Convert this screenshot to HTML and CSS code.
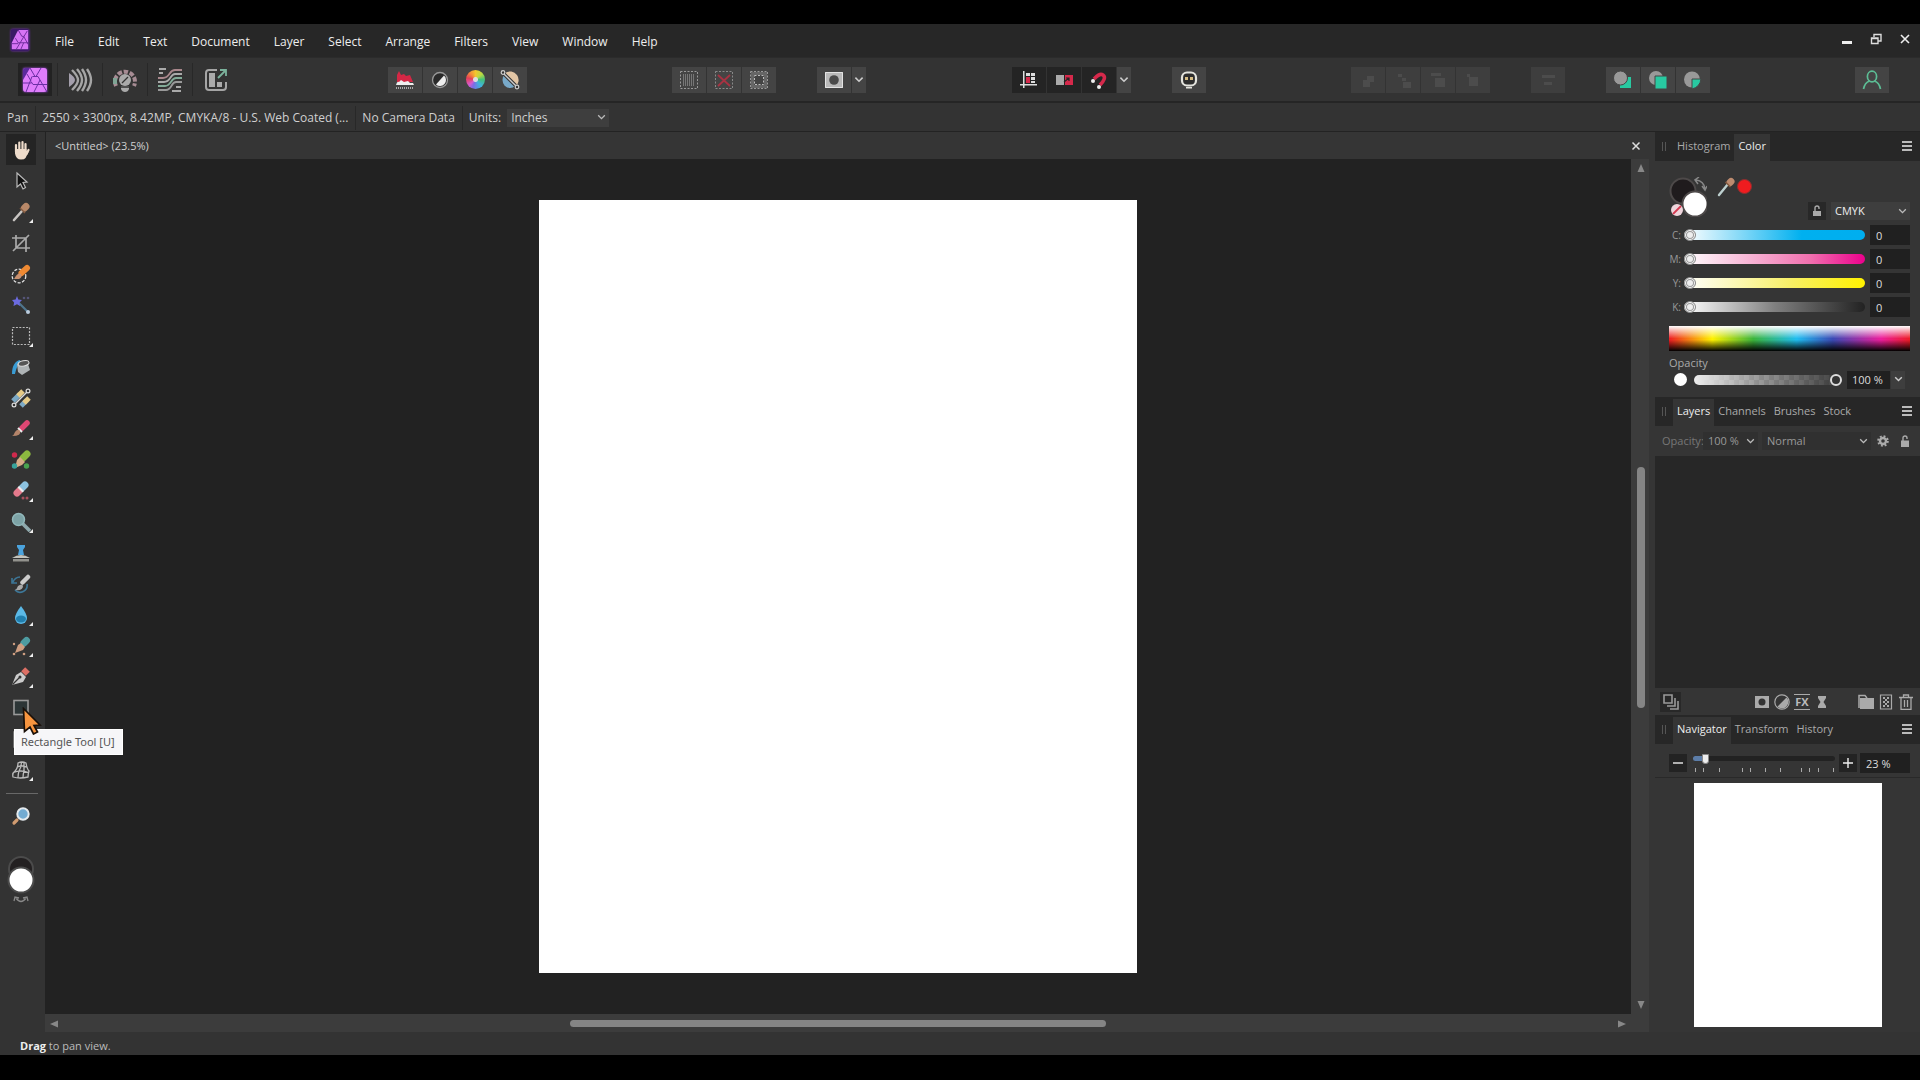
FILE: index.html
```html
<!DOCTYPE html>
<html lang="en">
<head>
<meta charset="utf-8">
<title>Untitled (23.5%)</title>
<link rel="stylesheet" href="styles.css">
</head>
<body>
<div class="app">
  <header class="menubar">
    <svg class="logo" viewBox="0 0 20 24"><path fill="#3b1a66" d="M2 0h16a2 2 0 0 1 2 2v20a2 2 0 0 1-2 2H2a2 2 0 0 1-2-2V2a2 2 0 0 1 2-2z"/><path fill="#d774f5" d="M8 1h11v21H1v-7z"/><path fill="none" stroke="#6a2a98" stroke-width="1" d="M8 1l4 7M18 2L6 22M5 10l3 5h11M12 8h2l5 9M14 15l-3 7M1 16h7"/></svg>
    <nav class="menus">
      <button>File</button><button>Edit</button><button>Text</button><button>Document</button><button>Layer</button><button>Select</button><button>Arrange</button><button>Filters</button><button>View</button><button>Window</button><button>Help</button>
    </nav>
    <div class="win">
      <button aria-label="Minimize"><svg viewBox="0 0 12 12"><path fill="#eee" d="M1 8h10v3H1z"/></svg></button>
      <button aria-label="Restore"><svg viewBox="0 0 12 12"><path fill="none" stroke="#ddd" stroke-width="1.4" d="M4 4V1.500h7V8H8.500M1.500 5h6.500v5.500H1.500zM1 5.500h7"/></svg></button>
      <button aria-label="Close"><svg viewBox="0 0 12 12"><path fill="none" stroke="#eee" stroke-width="1.6" d="M2 2l8 8M10 2l-8 8"/></svg></button>
    </div>
  </header>

  <div class="toolbar">
    <div class="personas">
      <button class="on" aria-label="Photo"><svg viewBox="0 0 26 26"><rect x="1" y="1" width="24" height="24" rx="3" fill="#df7dfb"/><path fill="#5b2a9c" d="M3 1h5L1 13V3a2 2 0 0 1 2-2z"/><path fill="none" stroke="#6b2fa5" stroke-width="1" d="M8 1l5 8.500M19 1l-5 8.500M5 7l4 7M1 16h8.500M10 9.500L4 25M10.500 9.500h5.500L18 13l7 12M18 13l-6 12M15 17.500h10M9 14.500l2 3h4"/></svg></button>
      <button aria-label="Liquify"><svg viewBox="0 0 26 26"><path fill="#a49fac" d="M2 6q6 4 6 7t-6 7z"/><path fill="none" stroke="#a5a5a5" stroke-width="2.400" d="M5 3q6 6 6 10T5 23M10 2q5 6 5 11t-5 11M15 2q4 6 4 11t-4 11M20 2q4 6 4 11t-4 11"/></svg></button>
      <button aria-label="Develop"><svg viewBox="0 0 26 26"><path fill="none" stroke="#a78c94" stroke-width="4" stroke-dasharray="4.500 1.700" d="M4 19a10 10 0 1 1 18 0"/><path fill="none" stroke="#7fa495" stroke-width="4" d="M3 11v6"/><circle cx="13" cy="13" r="6" fill="#aaa"/><path fill="#aaa" d="M9 19h8v3q-1 3-4 3t-4-3z"/><path stroke="#333" stroke-width="1.300" d="M10 16l6-6M9 20h8"/></svg></button>
      <button aria-label="Tone Mapping"><svg viewBox="0 0 26 26"><g fill="none" stroke-width="1.800"><path stroke="#aaa" d="M2 2h7M2 6h4M19 20h5M15 24h9"/><path stroke="#a9878c" d="M1 11h5c7 0 6-8 12-8h7"/><path stroke="#aaa" d="M1 15h6c7 0 6-8 11-8h7"/><path stroke="#83ab98" d="M1 19h7c6 0 6-8 11-8h6"/><path stroke="#999" d="M1 23h8c6 0 5-8 10-8h6"/></g></svg></button>
      <button aria-label="Export"><svg viewBox="0 0 26 26"><path fill="none" stroke="#a5a5a5" stroke-width="2" d="M14 3H6a3 3 0 0 0-3 3v14a3 3 0 0 0 3 3h14a3 3 0 0 0 3-3v-5"/><path fill="#aaa" d="M6 6h6v14H6zM14 15h5v5h-5z"/><path fill="none" stroke="#7bb29c" stroke-width="1.800" d="M15 11l8-8M17 3h6v6"/></svg></button>
    </div>
    <div class="group wide">
      <button aria-label="Auto Levels"><svg viewBox="0 0 20 20"><path fill="#d42745" d="M2 12V5l2-4 2 4 3-1 2 2 4-1 3 7z"/><path fill="#eee" d="M1 15q1-4 3-3l2-2 3 2 4-1 2 2 3 0 1 2z"/><path stroke="#aaa" stroke-dasharray="1 1" stroke-width="2" d="M1 18h18"/></svg></button>
      <button aria-label="Auto Contrast"><svg viewBox="0 0 20 20"><circle cx="10" cy="10" r="7.500" fill="#2a2a2a" stroke="#999" stroke-width="1.300"/><path fill="#eee" d="M14 5.500A6 6 0 0 1 6 14.500z"/></svg></button>
      <button aria-label="Auto Colors"><i class="wheel"></i></button>
      <button aria-label="Auto White Balance"><svg viewBox="0 0 20 20"><ellipse cx="10" cy="10" rx="7.500" ry="8" fill="#78a9c9"/><path fill="#e2c5a5" d="M5 3a8 8 0 0 1 10 14z"/><path stroke="#333" stroke-width="3.500" d="M2 2l15 15"/><path stroke="#ccc" stroke-width="1.400" d="M2 2l15 15"/><g fill="#333" stroke="#ccc" stroke-width="1.200"><circle cx="3" cy="2.500" r="1.800"/><circle cx="17" cy="17" r="1.800"/></g></svg></button>
    </div>
    <div class="group wide">
      <button aria-label="Select All"><svg viewBox="0 0 20 20"><path stroke="#777" stroke-dasharray="1 1" stroke-width="12" d="M4 10h12"/><rect x="1.500" y="1.500" width="17" height="17" fill="none" stroke="#999" stroke-dasharray="2 1.500"/></svg></button>
      <button aria-label="Deselect"><svg viewBox="0 0 20 20"><rect x="1.500" y="1.500" width="17" height="17" fill="none" stroke="#888" stroke-dasharray="2 1.500"/><path stroke="#a83242" stroke-width="1.800" d="M4 5l12 11M16 5L4 16"/></svg></button>
      <button aria-label="Invert Selection"><svg viewBox="0 0 20 20"><rect x="1.500" y="1.500" width="17" height="17" fill="none" stroke="#999" stroke-dasharray="2 1.500"/><rect x="3.500" y="3.500" width="13" height="13" fill="none" stroke="#666" stroke-width="3"/><rect x="5.500" y="5.500" width="9" height="9" fill="#444" stroke="#bbb" stroke-dasharray="2 1.500"/></svg></button>
    </div>
    <div class="group">
      <button aria-label="Quick Mask"><svg viewBox="0 0 20 20"><path fill="#b9b9b9" d="M1 2h18v16H1z"/><path fill="none" stroke="#e3e3e3" d="M1.500 2.500h17v15h-17z"/><circle cx="10" cy="10" r="4.800" fill="#4a4a4a"/></svg></button>
      <button class="drop" aria-label="Mask options"><svg viewBox="0 0 10 10"><path class="chev" d="M2 3l3 3 3-3"/></svg></button>
    </div>
    <div class="group dark wide">
      <button aria-label="Force Pixel Alignment"><svg viewBox="0 0 20 20"><path fill="#ddd" d="M4 1h1.500v17H4zM1 14h17v1.500H1zM7 3h4v3H7zM12 3h4v3h-4zM12 7h4v3h-4zM12 11h4v2h-4z"/><path fill="#d6294b" d="M7 7h4v6H7z"/></svg></button>
      <button aria-label="Move by Whole Pixels"><svg viewBox="0 0 20 20"><path fill="#aaa" d="M2 5h8v10H2z"/><path fill="#d6294b" d="M11 5h8v10h-8z"/><path fill="none" stroke="#242424" stroke-width="1.200" d="M10 12l5-4M12 8h3v3"/></svg></button>
      <button aria-label="Snapping"><svg viewBox="0 0 20 20"><path fill="none" stroke="#d6294b" stroke-width="3.600" d="M5 9c3-3 6-6 9-4s1 6-3 10"/><circle cx="4" cy="11" r="2" fill="#eee"/><circle cx="10" cy="17" r="2" fill="#eee"/></svg></button>
      <button class="drop lit" aria-label="Snapping options"><svg viewBox="0 0 10 10"><path class="chev" d="M2 3l3 3 3-3"/></svg></button>
    </div>
    <div class="group">
      <button aria-label="Assistant"><svg viewBox="0 0 20 20"><rect x="3" y="2.500" width="14" height="13" rx="5" fill="#2d2d2d" stroke="#e4e4de" stroke-width="2.200"/><path fill="#d6bd85" d="M6 7h3v3H6zM11 7h3v3h-3z"/><path fill="#e4e4de" d="M7 17h6v1.500H7z"/></svg></button>
    </div>
    <div class="group wide dim">
      <button aria-label="Move to Back" disabled><svg viewBox="0 0 20 20"><path fill="#5a5a5a" d="M5 10h4V6h7v6h-4v5H5z"/></svg></button>
      <button aria-label="Back One" disabled><svg viewBox="0 0 20 20"><path fill="#5a5a5a" d="M5 4h4v3H5zM9 8h4v3H9zM10 12h8v6h-8z"/></svg></button>
      <button aria-label="Forward One" disabled><svg viewBox="0 0 20 20"><path fill="#5a5a5a" d="M3 3h10v3H3zM7 8h10v9H7z"/></svg></button>
      <button aria-label="Move to Front" disabled><svg viewBox="0 0 20 20"><path fill="#5a5a5a" d="M4 4h3v3H4zM6 7h9v9H6z"/></svg></button>
    </div>
    <div class="group dim">
      <button aria-label="Alignment" disabled><svg viewBox="0 0 20 20"><path fill="#5a5a5a" d="M4 5h13v3H4zM6 12h8v3H6z"/></svg></button>
    </div>
    <div class="group">
      <button aria-label="Insert Behind"><svg viewBox="0 0 20 20"><path fill="#28c9a1" d="M7 7h11v11H7z"/><circle cx="7.500" cy="8" r="7" fill="#999" stroke="#444"/></svg></button>
      <button aria-label="Insert on Top"><svg viewBox="0 0 20 20"><circle cx="8" cy="8" r="7" fill="#999"/><path fill="#28c9a1" stroke="#444" d="M7 6h12v13H7z"/></svg></button>
      <button aria-label="Insert Inside"><svg viewBox="0 0 20 20"><circle cx="9" cy="9.500" r="8" fill="#999"/><path fill="#28c9a1" stroke="#444" d="M9 9h9q-1 8-9 10z"/></svg></button>
    </div>
    <div class="group wide">
      <button aria-label="Account"><svg viewBox="0 0 20 20"><path fill="none" stroke="#5cbd95" stroke-width="1.700" d="M1.500 19c1-5 3-7 6-8M18.500 19c-1-5-3-7-6-8"/><ellipse cx="10" cy="6.500" rx="4.600" ry="5.300" fill="none" stroke="#5cbd95" stroke-width="1.700"/></svg></button>
    </div>
  </div>

  <div class="context">
    <span class="cell">Pan</span>
    <span class="cell">2550 × 3300px, 8.42MP, CMYKA/8 - U.S. Web Coated (...</span>
    <span class="cell">No Camera Data</span>
    <label for="units">Units:</label>
    <select id="units" class="sel units"><option>Inches</option></select>
  </div>

  <div class="main">
    <aside class="tools">
      <button class="on" aria-label="View"><svg viewBox="0 0 20 20"><g fill="none" stroke="#eedccb" stroke-width="2.200" stroke-linecap="round"><path d="M5 5v7M8.300 2.500V11M11.500 2v9M14.500 4v8M17.500 10l-2 4"/></g><path fill="#eedccb" d="M4 9h11.500v2l2 1-3 6q-1 1.500-4.500 1.500-5 0-6-6z"/></svg></button>
      <button aria-label="Move"><svg viewBox="0 0 20 20"><path fill="#111" stroke="#bbb" stroke-width="1.200" d="M6 2l10 9-4 .5 2.500 5-2.500 1.500-2.500-5L6 16z"/></svg></button>
      <button class="fly" aria-label="Colour Picker"><svg viewBox="0 0 20 20"><path stroke="#c8c5c2" stroke-width="2.600" stroke-linecap="round" d="M3 18l8-9"/><path stroke="#b88868" stroke-width="7" stroke-linecap="round" d="M13.500 6L15 4.500"/><path stroke="#825a40" stroke-width="1.500" d="M9 6l5 5"/></svg></button>
      <button aria-label="Crop"><svg viewBox="0 0 20 20"><path fill="none" stroke="#aaa" stroke-width="1.700" d="M5 2v13h14M1 5h14v14M2 18L18 2"/></svg></button>
      <button aria-label="Selection Brush"><svg viewBox="0 0 20 20"><circle cx="8" cy="12" r="6.800" fill="none" stroke="#ddd" stroke-dasharray="3 1.500" stroke-width="1.300"/><path stroke="#ef8a33" stroke-width="6" stroke-linecap="round" d="M10.500 9L16 4"/><path fill="#c99170" d="M3 15q4-7 7-5 2 3-2 5z"/></svg></button>
      <button aria-label="Flood Select"><svg viewBox="0 0 20 20"><path stroke="#4f758d" stroke-width="2.200" d="M7 7l10 10"/><circle cx="17" cy="17" r="2" fill="#bcd"/><path fill="#6c6be0" d="M6 1l1.300 3.500L11 5 8.500 7.500 9 11 6 9.300 2.500 11l.6-3.500L1 5l3.600-.5z"/><circle cx="13" cy="3" r="1.300" fill="#557"/><circle cx="17" cy="3" r="1.300" fill="#557"/></svg></button>
      <button class="fly" aria-label="Marquee"><svg viewBox="0 0 20 20"><rect x="1.500" y="1.500" width="17" height="17" fill="none" stroke="#bbb" stroke-dasharray="2 1.400" stroke-width="1.200"/></svg></button>
      <button aria-label="Flood Fill"><svg viewBox="0 0 20 20"><path fill="#3a9cd4" d="M1 17C1 9 4 4 9 3l1 3c-4 2-5 7-6 11z"/><path fill="#aeb3b5" d="M6 7l10-3 3 9-8 5-4-3z"/><ellipse cx="12.500" cy="6.500" rx="5.500" ry="2.600" fill="#555" stroke="#ddd" transform="rotate(-12 12 6)"/></svg></button>
      <button aria-label="Gradient"><svg viewBox="0 0 20 20"><path stroke="#7ba8c4" stroke-width="5" d="M2 13l7-7M10 18l6-6"/><path stroke="#e6ca86" stroke-width="5" d="M7 8l5-5M13 15l5-5"/><path stroke="#ddd" stroke-width="1.500" d="M3 17L17 3"/><g fill="#333" stroke="#ddd" stroke-width="1.200"><circle cx="3" cy="17" r="1.900"/><circle cx="17" cy="3" r="1.900"/></g></svg></button>
      <button class="fly" aria-label="Paint Brush"><svg viewBox="0 0 20 20"><path stroke="#df4773" stroke-width="5.500" stroke-linecap="round" d="M11 9l5-5"/><path stroke="#eee" stroke-width="2" d="M7 9l4 4"/><path fill="#b4846a" d="M1 17q2-1 3-4 3-4 5-1 2 5-8 5z"/></svg></button>
      <button aria-label="Colour Replacement"><svg viewBox="0 0 20 20"><path stroke="#8cba3f" stroke-width="7" stroke-linecap="round" d="M12 8l4-4"/><path fill="#d7ac87" d="M4 18l2-8 3-3 5 5-3 3z"/><circle cx="3.500" cy="5" r="2.700" fill="#cf294c"/><circle cx="3.500" cy="16" r="2.700" fill="#38a39a"/><circle cx="15.500" cy="16" r="2.700" fill="#48a24f"/></svg></button>
      <button class="fly" aria-label="Erase Brush"><svg viewBox="0 0 20 20"><path stroke="#8cc3e1" stroke-width="7" stroke-linecap="round" d="M11 7l3-3"/><path stroke="#e47a8c" stroke-width="7" stroke-linecap="round" d="M8 10l-2 2"/><path stroke="#eee" stroke-width="7" d="M9 9l1.500-1.500"/><circle cx="12" cy="17" r="1.500" fill="#a8505d"/><circle cx="16" cy="17" r="1.500" fill="#a8505d"/></svg></button>
      <button class="fly" aria-label="Dodge Brush"><svg viewBox="0 0 20 20"><path stroke="#8fa9ad" stroke-width="3.600" d="M11 11l8 8"/><circle cx="7.500" cy="7.500" r="6" fill="#7da3a6" stroke="#91b8bb" stroke-width="1.500"/></svg></button>
      <button aria-label="Clone Brush"><svg viewBox="0 0 20 20"><path fill="#4ba3dd" d="M6 2h8v2l-2 3 1 5H7l1-5-2-3z"/><path fill="#c4c4bd" d="M1 15q9-6 18 0z"/><path fill="#92928d" d="M2 16h16v2.500H2z"/></svg></button>
      <button aria-label="Undo Brush"><svg viewBox="0 0 20 20"><path fill="none" stroke="#3d7798" stroke-width="1.600" d="M2 8a8 8 0 0 1 7-5M1 4v5h5M16 10a7 7 0 0 1-12 6"/><path stroke="#ccc" stroke-width="4.500" stroke-linecap="round" d="M11.500 8.500L17 3"/><path fill="#aaa" d="M4 16q2-1 3-4 4-3 5 0 0 5-8 4z"/></svg></button>
      <button class="fly" aria-label="Blur Brush"><svg viewBox="0 0 20 20"><path fill="#5bb9e7" d="M10 1q6 8 6 12a6 6 0 0 1-12 0q0-4 6-12z"/><ellipse cx="10" cy="14" rx="5" ry="3.400" fill="#217fae"/></svg></button>
      <button class="fly" aria-label="Healing Brush"><svg viewBox="0 0 20 20"><path stroke="#4e9ca1" stroke-width="7" stroke-linecap="round" d="M13 7l2.500-2.500"/><path fill="#cf9e81" d="M4 17l3-8 3-2 4 4-2 3z"/><circle cx="3" cy="8" r="1.200" fill="#cf9e81"/><circle cx="3" cy="18" r="1.300" fill="#cf9e81"/><circle cx="13" cy="18" r="1.300" fill="#cf9e81"/></svg></button>
      <button class="fly" aria-label="Pen"><svg viewBox="0 0 20 20"><path stroke="#dd7065" stroke-width="6.500" d="M12.500 6.500l4-4"/><path fill="#cbcbcb" d="M1 18L5 8l5-3 5 5-3 5z"/><path stroke="#333" stroke-width="1.300" d="M1.500 17.500l7-7"/><circle cx="9" cy="10" r="1.500" fill="#333"/></svg></button>
      <button aria-label="Rectangle"><svg viewBox="0 0 20 20"><rect x="3" y="2.500" width="14" height="14" fill="#2c3536" stroke="#999" stroke-width="1.600"/></svg></button>
      <button aria-label="Artistic Text"><svg viewBox="0 0 20 20"><path fill="none" stroke="#888" stroke-width="1.500" d="M3 18V3h14v15z"/></svg></button>
      <button class="fly" aria-label="Mesh Warp"><svg viewBox="0 0 20 20"><path fill="none" stroke="#bbb" stroke-width="1.300" d="M7 3q4-2 8 0 1 6 3 8-1 3-1 6-8 2-15 0-1-4 2-6 3-3 3-8zM6 7q5-2 10 0M2.500 12.500q7-3 15 0M10.500 2q0 5-2.500 9-1 3-1 7M13 2q0 5 0 9-1 3-1 7"/></svg></button>
      <hr>
      <button class="zoom" aria-label="Zoom"><svg viewBox="0 0 20 20"><path stroke="#d09b70" stroke-width="3.200" stroke-linecap="round" d="M3 17l3-3"/><circle cx="12" cy="8" r="5.700" fill="#72abd2" stroke="#e4eaee" stroke-width="2"/></svg></button>
      <button class="swatches" aria-label="Colours"><svg viewBox="0 0 28 50"><g stroke="#4b4b4b" stroke-width="2"><circle cx="14" cy="14" r="12" fill="#232021"/><circle cx="14" cy="25" r="12.500" fill="#fff"/></g><path fill="none" stroke="#888" stroke-width="1.300" d="M9 43q5 7 10 0M7 46l1-4 4 1M21 46l-1-4-4 1"/></svg></button>
      <div class="tip" role="tooltip">Rectangle Tool [U]</div>
      <svg class="cursor" viewBox="0 0 20 28"><path fill="#f7953f" stroke="#1a1009" stroke-width="1.700" d="M1.500 1.500l16.500 16.500-6 .5 3.500 6.500-4 2-3.500-7-5.500 4.500z"/></svg>
    </aside>

    <section class="doc">
      <div class="tabbar"><span>&lt;Untitled&gt; (23.5%)</span><button aria-label="Close document"><svg viewBox="0 0 12 12"><path fill="none" stroke="#ddd" stroke-width="1.500" d="M2.500 2.500l7 7M9.500 2.500l-7 7"/></svg></button></div>
      <div class="view">
        <div class="canvas"><div class="paper"></div></div>
        <div class="vbar"><svg viewBox="0 0 10 10"><path fill="#888" d="M5 1l3.500 8h-7z"/></svg><div class="rail"><i></i></div><svg viewBox="0 0 10 10"><path fill="#888" d="M5 9l3.500-8h-7z"/></svg></div>
        <div class="hbar"><svg viewBox="0 0 10 10"><path fill="#888" d="M1 5l8-3.500v7z"/></svg><div class="rail"><i></i></div><svg viewBox="0 0 10 10"><path fill="#888" d="M9 5L1 1.500v7z"/></svg></div>
      </div>
    </section>

    <aside class="panels">
      <section>
        <div class="tabs"><i class="grip"></i><button>Histogram</button><button class="on">Color</button><button class="burger" aria-label="Panel menu"></button></div>
        <div class="color">
          <div class="picks">
            <svg class="wells" viewBox="0 0 38 40"><g stroke="#4d4949" stroke-width="2"><circle cx="14" cy="14" r="12.500" fill="#1f1b1d"/><circle cx="26" cy="27" r="12.500" fill="#fff"/></g><circle cx="8" cy="33" r="6" fill="#eed5dc"/><path stroke="#d33950" stroke-width="1.800" d="M4 37l8-8"/><path fill="none" stroke="#888" stroke-width="1.500" d="M27 3q8 1 9 9M30 0l-4 3 3 4M33 9l3 4 2-4"/></svg>
            <svg class="pick" viewBox="0 0 20 20"><path stroke="#bdd0cf" stroke-width="2.400" stroke-linecap="round" d="M3 18l9-11"/><path stroke="#bd8b6f" stroke-width="7" stroke-linecap="round" d="M14 5.500L15 4.500"/><path stroke="#825a40" stroke-width="1.500" d="M9.500 5l5 5"/></svg>
            <i class="red"></i>
            <button class="lockbtn" aria-label="Lock colour"><svg viewBox="0 0 12 12"><path fill="#aaa" d="M2 6h8v5H2z"/><path fill="none" stroke="#aaa" stroke-width="1.400" d="M4 6V3a2 2 0 0 1 4 0v1"/></svg></button>
            <select class="sel mode" aria-label="Colour mode"><option>CMYK</option></select>
          </div>
          <div class="ch c"><label for="c">C:</label><input id="c" type="range" value="0"><input type="text" value="0" aria-label="Cyan"></div>
          <div class="ch m"><label for="m">M:</label><input id="m" type="range" value="0"><input type="text" value="0" aria-label="Magenta"></div>
          <div class="ch y"><label for="y">Y:</label><input id="y" type="range" value="0"><input type="text" value="0" aria-label="Yellow"></div>
          <div class="ch k"><label for="k">K:</label><input id="k" type="range" value="0"><input type="text" value="0" aria-label="Black"></div>
          <div class="spectrum"></div>
          <label class="oplabel" for="op">Opacity</label>
          <div class="op"><i class="dot"></i><input id="op" type="range" value="100"><input type="text" value="100 %" aria-label="Opacity value"><button aria-label="Opacity options"><svg viewBox="0 0 10 10"><path class="chev" d="M2 3l3 3 3-3"/></svg></button></div>
        </div>
      </section>

      <section>
        <div class="tabs"><i class="grip"></i><button class="on">Layers</button><button>Channels</button><button>Brushes</button><button>Stock</button><button class="burger" aria-label="Panel menu"></button></div>
        <div class="layerbar">
          <label for="lop">Opacity:</label>
          <select id="lop" class="sel lop"><option>100 %</option></select>
          <select class="sel blend" aria-label="Blend mode"><option>Normal</option></select>
          <button aria-label="Blend options"><svg viewBox="0 0 12 12"><circle cx="6" cy="6" r="3" fill="none" stroke="#aaa" stroke-width="2.400"/><circle cx="6" cy="6" r="4.800" fill="none" stroke="#aaa" stroke-width="2" stroke-dasharray="1.900 1.870"/></svg></button>
          <button aria-label="Lock layer"><svg viewBox="0 0 12 12"><path fill="#aaa" d="M2 5.500h8V12H2z"/><path fill="none" stroke="#aaa" stroke-width="1.400" d="M4 6V3a2 2 0 0 1 4 0v1"/></svg></button>
        </div>
        <div class="layers"></div>
        <div class="layeracts">
          <button class="stack" aria-label="Edit all layers"><svg viewBox="0 0 16 16"><path fill="none" stroke="#999" stroke-width="1.600" d="M1 1h8v8H1zM12 4v8H4M15 7v8H7"/></svg></button>
          <button aria-label="Mask layer"><svg viewBox="0 0 16 16"><path fill="#aaa" d="M1 2h14v12H1z"/><circle cx="8" cy="8" r="3.500" fill="#333"/></svg></button>
          <button aria-label="Adjustments"><svg viewBox="0 0 16 16"><circle cx="8" cy="8" r="7.200" fill="none" stroke="#aaa" stroke-width="1.200"/><path fill="#aaa" d="M12.500 3.500a6 6 0 0 1-9 9z"/></svg></button>
          <button class="fx" aria-label="Layer effects"><span>FX</span></button>
          <button aria-label="Live filters"><svg viewBox="0 0 16 16"><path fill="#aaa" d="M4 2h8v2L9.500 8l2.500 4v2H4v-2l2.500-4L4 4z"/></svg></button>
          <button class="far" aria-label="Group"><svg viewBox="0 0 16 16"><path fill="#aaa" d="M2 4h14v11H2z"/><path fill="none" stroke="#aaa" stroke-width="1.500" d="M1 14V1.500h6L9 4"/></svg></button>
          <button aria-label="Pixel layer"><svg viewBox="0 0 16 16"><path fill="none" stroke="#aaa" stroke-width="1.200" d="M2.500 1h11v14h-11z"/><path fill="none" stroke="#aaa" stroke-width="2" stroke-dasharray="2 2" d="M5 4h6M7 6h4M5 8h6M7 10h4M5 12h6"/></svg></button>
          <button aria-label="Delete layer"><svg viewBox="0 0 16 16"><path fill="none" stroke="#aaa" stroke-width="1.300" d="M1 3.500h14M5.500 3V1h5v2M3 4v11.300h10V4M6.500 6v7M9.500 6v7"/></svg></button>
        </div>
      </section>

      <section class="navsec">
        <div class="tabs"><i class="grip"></i><button class="on">Navigator</button><button>Transform</button><button>History</button><button class="burger" aria-label="Panel menu"></button></div>
        <div class="navbar">
          <button aria-label="Zoom out"><svg viewBox="0 0 12 12"><path stroke="#eee" stroke-width="1.400" d="M1 6h10"/></svg></button>
          <div class="zoomer">
            <input type="range" value="7" aria-label="Zoom">
            <svg viewBox="0 0 142 4"><path stroke="#aaa" stroke-width="4" stroke-dasharray="1 7 1 15 1 22 1 7 1 14 1 14 1 20 1 7 1 8 1 14 1 99" d="M2 2h140"/></svg>
          </div>
          <button aria-label="Zoom in"><svg viewBox="0 0 12 12"><path stroke="#eee" stroke-width="1.400" d="M1 6h10M6 1v10"/></svg></button>
          <input type="text" value="23 %" aria-label="Zoom value">
        </div>
        <div class="preview"><div class="paper"></div></div>
      </section>
    </aside>
  </div>
  <footer class="status"><b>Drag</b> to pan view.</footer>
</div>
</body>
</html>
```
FILE: styles.css
```css
* { box-sizing: border-box; }
body {
  margin: 0;
  height: 100vh;
  padding: 24px 0 25px;
  background: #000;
  color: #d0d0d0;
  font: 11px/16px "Open Sans", "Noto Sans", sans-serif;
}
button, input, select { font: inherit; color: inherit; border: 0; margin: 0; padding: 0; background: none; border-radius: 0; outline: 0; }
button { display: flex; align-items: center; justify-content: center; }
svg { display: block; }
.chev { fill: none; stroke: #ccc; stroke-width: 1.3; }

.app { height: 100%; display: flex; flex-direction: column; background: #333; }

.menubar { flex: none; height: 33px; display: flex; align-items: center; background: #272727; padding: 0 9px 0 10px; }
.logo { width: 20px; height: 24px; margin-bottom: 2px; padding: 1px 0; filter: drop-shadow(0 0 1px #7a2fc0); }
.menus { display: flex; gap: 24px; margin: 2px 0 0 25px; color: #eee; font-size: 12px; }
.win { margin: 0 0 3px auto; display: flex; gap: 17px; }
.win svg { width: 12px; height: 12px; }

.toolbar { flex: none; height: 46px; display: flex; align-items: center; padding: 0 31px 0 18px; border-top: 1px solid #2b2b2b; border-bottom: 2px solid #252525; }
.personas { display: flex; margin-right: 5px; }
.personas button { width: 45px; height: 33px; border-right: 1px solid #282828; }
.personas button:first-child { width: 40px; padding-right: 5px; }
.personas button:last-child { border: 0; }
.personas .on { background: linear-gradient(#222, #222) 0 0 / 34px 33px no-repeat; }
.personas svg { width: 26px; height: 26px; }
.personas .on svg { filter: drop-shadow(0 0 1px #a14be0); }
.group { display: flex; gap: 1px; margin-left: 41px; }
.group.wide { margin-left: auto; }
.group button { width: 34px; height: 26px; background: #444; }
.group svg { width: 20px; height: 20px; }
.group .drop { width: 14px; }
.group .drop svg { width: 12px; height: 12px; }
.dark button { background: #242424; }
.dark .lit { background: #444; }
.dim button { background: #3e3e3e; }
.dim svg { opacity: .5; }
.wheel { width: 19px; height: 19px; border-radius: 50%; background: radial-gradient(circle, #ddd 0 2px, transparent 3px), conic-gradient(#f4c62e, #b7d943 50deg, #46bf78 90deg, #3fb4dd 140deg, #7d6be6 200deg, #d65bcf 230deg, #e54055 280deg, #f38c3a 320deg, #f4c62e); }

.context { flex: none; height: 29px; display: flex; align-items: center; border-bottom: 1px solid #232323; padding: 1px 0 0 7px; font-size: 12px; }
.cell { padding-right: 7px; margin-right: 6px; border-right: 1px solid #282828; line-height: 24px; }
.sel { appearance: none; background: #3e3e3e url("data:image/svg+xml,%3Csvg xmlns='http://www.w3.org/2000/svg' viewBox='0 0 10 10'%3E%3Cpath d='M2 3l3 3 3-3' fill='none' stroke='%23bbb' stroke-width='1.200'/%3E%3C/svg%3E") right 2px center / 11px 11px no-repeat; }
.units { width: 102px; height: 18px; margin-left: 6px; padding-left: 4px; }

.main { flex: 1; min-height: 0; display: flex; }
.tools { position: relative; flex: none; width: 45px; display: flex; flex-direction: column; align-items: flex-start; padding: 2px 0 0 6px; }
.tools button { position: relative; flex: none; width: 30px; height: 31px; }
.tools .on { background: #242424; }
.tools button svg { width: 20px; height: 20px; }
.fly::after { content: ""; position: absolute; right: 3px; bottom: 4px; border: 2px solid; border-color: transparent #eee #eee transparent; }
.tools hr { width: 32px; margin: 8px 0 6px; border: 0; border-top: 1px solid #686868; }
.tools .swatches { margin-top: 24px; height: 50px; }
.tools .swatches svg { width: 28px; height: 50px; }
.tip { position: absolute; z-index: 2; left: 14px; top: 597px; padding: 4px 7px 4px 6px; background: #f6f6f8; border: 1px solid #fff; color: #555; white-space: nowrap; font-family: "Noto Sans", sans-serif; }
.cursor { position: absolute; z-index: 3; left: 22px; top: 575px; width: 20px; height: 28px; }

.doc { flex: 1; min-width: 0; display: flex; flex-direction: column; }
.tabbar { flex: none; height: 27px; display: flex; align-items: center; justify-content: space-between; padding: 1px 7px 0 9px; background: #353535; border-left: 1px solid #222; }
.tabbar svg { width: 12px; height: 12px; }
.view { flex: 1; min-height: 0; display: grid; grid-template: 1fr 18px / 1fr 18px; background: #3c3c3c; }
.canvas { background: #222; display: grid; place-items: center; min-height: 0; }
.paper { background: #fff; aspect-ratio: 2550 / 3300; }
.canvas .paper { height: 90.5%; }
.vbar, .hbar { display: flex; align-items: center; gap: 6px; }
.vbar { flex-direction: column; padding: 4px 0 4px 2px; }
.hbar { padding: 1px 4px 0; }
.vbar svg, .hbar svg { width: 10px; height: 10px; }
.rail { flex: 1; display: flex; }
.rail::before, .rail::after { content: ""; }
.rail i { border-radius: 4px; background: #858585; }
.vbar .rail { flex-direction: column; width: 8px; }
.vbar .rail::before { flex: 289; }
.vbar .rail i { flex: 243; }
.vbar .rail::after { flex: 287; }
.hbar .rail i { height: 7px; flex: 35; }
.hbar .rail::before, .hbar .rail::after { flex: 33; }

.panels { flex: none; width: 271px; display: flex; flex-direction: column; padding-left: 6px; background: #353535; }
.tabs { display: flex; height: 29px; padding: 2px 8px 0 0; background: #272727; color: #aaa; }
.tabs button { padding: 0 4px 3px; }
.tabs .on { background: #353535; color: #eee; }
.grip { width: 4px; height: 9px; margin: 8px 7px 0 7px; border: solid #555; border-width: 0 1px; }
.tabs .burger { margin: 7px 0 0 auto; padding: 0; width: 10px; height: 10px; border: solid #bbb; border-width: 2px 0; background: linear-gradient(#bbb, #bbb) 0 2px / 10px 2px no-repeat; }
.color { padding: 16px 10px 8px 14px; height: 236px; }
.picks { display: flex; align-items: flex-end; height: 43px; }
.wells { width: 38px; height: 40px; align-self: flex-start; }
.pick { width: 20px; height: 20px; margin-left: 9px; align-self: flex-start; }
.red { width: 15px; height: 15px; border-radius: 50%; margin: 2px auto 0 1px; align-self: flex-start; background: #ef1c1f; border: 1px solid #8a3030; }
.lockbtn { width: 18px; height: 18px; background: #282828; margin-right: 5px; }
.lockbtn svg { width: 12px; height: 12px; }
.mode { width: 79px; height: 18px; padding-left: 4px; background-color: #3e3e3e; color: #eee; }
.ch { display: flex; align-items: center; height: 24px; }
.ch.c { margin-top: 3px; }
.ch label { width: 12px; text-align: right; font-size: 10px; color: #999; }
input[type=range] { appearance: none; min-width: 0; height: 10px; border-radius: 5px; }
input[type=range]::-webkit-slider-thumb { appearance: none; width: 12px; height: 12px; border-radius: 50%; background: #eee; border: 1px solid #888; box-shadow: inset 0 0 0 1px #fff, inset 0 0 0 2px #999; }
.ch input[type=range] { flex: 1; margin: 0 5px 0 3px; }
.c input[type=range] { background: linear-gradient(90deg, #fff, #00b0ef 65%, #00aeef); }
.m input[type=range] { background: linear-gradient(90deg, #fff, #f06fae 70%, #ec008c); }
.y input[type=range] { background: linear-gradient(90deg, #fff, #f7ef63 60%, #fff200); }
.k input[type=range] { background: linear-gradient(90deg, #fff, #808080 50%, #222); }
input[type=text] { background: #202020; color: #ddd; height: 20px; padding-left: 6px; }
.ch input[type=text] { width: 40px; }
.spectrum { height: 25px; margin-top: 7px; background: linear-gradient(#fff, rgba(255,255,255,0) 50%, rgba(0,0,0,0) 55%, #000), linear-gradient(90deg, #ed1c24, #fff200 18%, #3cb53c 35%, #1fbdf0 53%, #3b4ab5 68%, #ec1e9c 88%, #ed1c24); }
.oplabel { display: block; margin-top: 4px; color: #aaa; }
.op { display: flex; align-items: center; height: 17px; }
.dot { width: 13px; height: 13px; border-radius: 50%; background: #fff; margin: 0 7px 0 5px; }
.op input[type=range] { flex: 1; margin-right: 5px; background: linear-gradient(90deg, #eee, rgba(153,153,153,.8) 45%, rgba(51,51,51,.9)), repeating-conic-gradient(#555 0 25%, #999 0 50%) 0 0 / 10px 10px; }
.op input[type=range]::-webkit-slider-thumb { background: #333; border: 2px solid #ddd; box-shadow: none; }
.op input[type=text] { width: 43px; height: 18px; padding-left: 5px; }
.op button { width: 14px; height: 18px; background: #3e3e3e; margin: 0 5px 0 1px; }
.op svg { width: 11px; height: 11px; }

.layerbar { display: flex; align-items: center; height: 30px; padding: 0 9px 0 7px; }
.layerbar label { color: #777; width: 41px; }
.layerbar .sel { height: 18px; background-color: #303030; color: #999; padding-left: 5px; }
.lop { width: 55px; margin-right: 4px; }
.blend { width: 109px; margin-right: 6px; }
.layerbar svg { width: 12px; height: 12px; }
.layerbar button:last-child { margin-left: auto; }
.layers { height: 232px; background: #272727; }
.layeracts { display: flex; align-items: center; height: 27px; gap: 4px; padding: 0 6px 0 5px; }
.layeracts svg { width: 16px; height: 16px; }
.layeracts .stack { width: 21px; height: 20px; background: #282828; margin-right: auto; }
.layeracts .far { margin-left: 24px; }
.fx span { width: 16px; height: 16px; line-height: 12px; border: solid #aaa; border-width: 1px 0; color: #bbb; font-weight: 700; font-size: 11px; padding-top: 1px; }
.navsec { flex: 1; min-height: 0; display: flex; flex-direction: column; }
.navsec .tabs { flex: none; }
.navbar { flex: none; display: flex; align-items: center; height: 34px; padding: 5px 10px 0 14px; border-bottom: 1px solid #292929; }
.navbar button { width: 18px; height: 18px; background: #232323; }
.navbar button svg { width: 12px; height: 12px; }
.navbar > input { width: 50px; margin-left: 3px; }
.zoomer { flex: 1; margin: 2px 4px 0 6px; }
.zoomer input[type=range] { display: block; width: 100%; height: 5px; margin: 0 0 7px; background: linear-gradient(90deg, #5c7da8 8%, #222 8%); }
.zoomer input[type=range]::-webkit-slider-thumb { width: 7px; height: 10px; border-radius: 1px 1px 4px 4px; box-shadow: none; }
.zoomer svg { width: 100%; height: 4px; }
.preview { flex: 1; min-height: 0; display: grid; place-items: center; }
.preview .paper { width: 188px; }

.status { flex: none; height: 23px; padding: 6px 0 0 20px; color: #bbb; }
.status b { color: #eee; }
```
